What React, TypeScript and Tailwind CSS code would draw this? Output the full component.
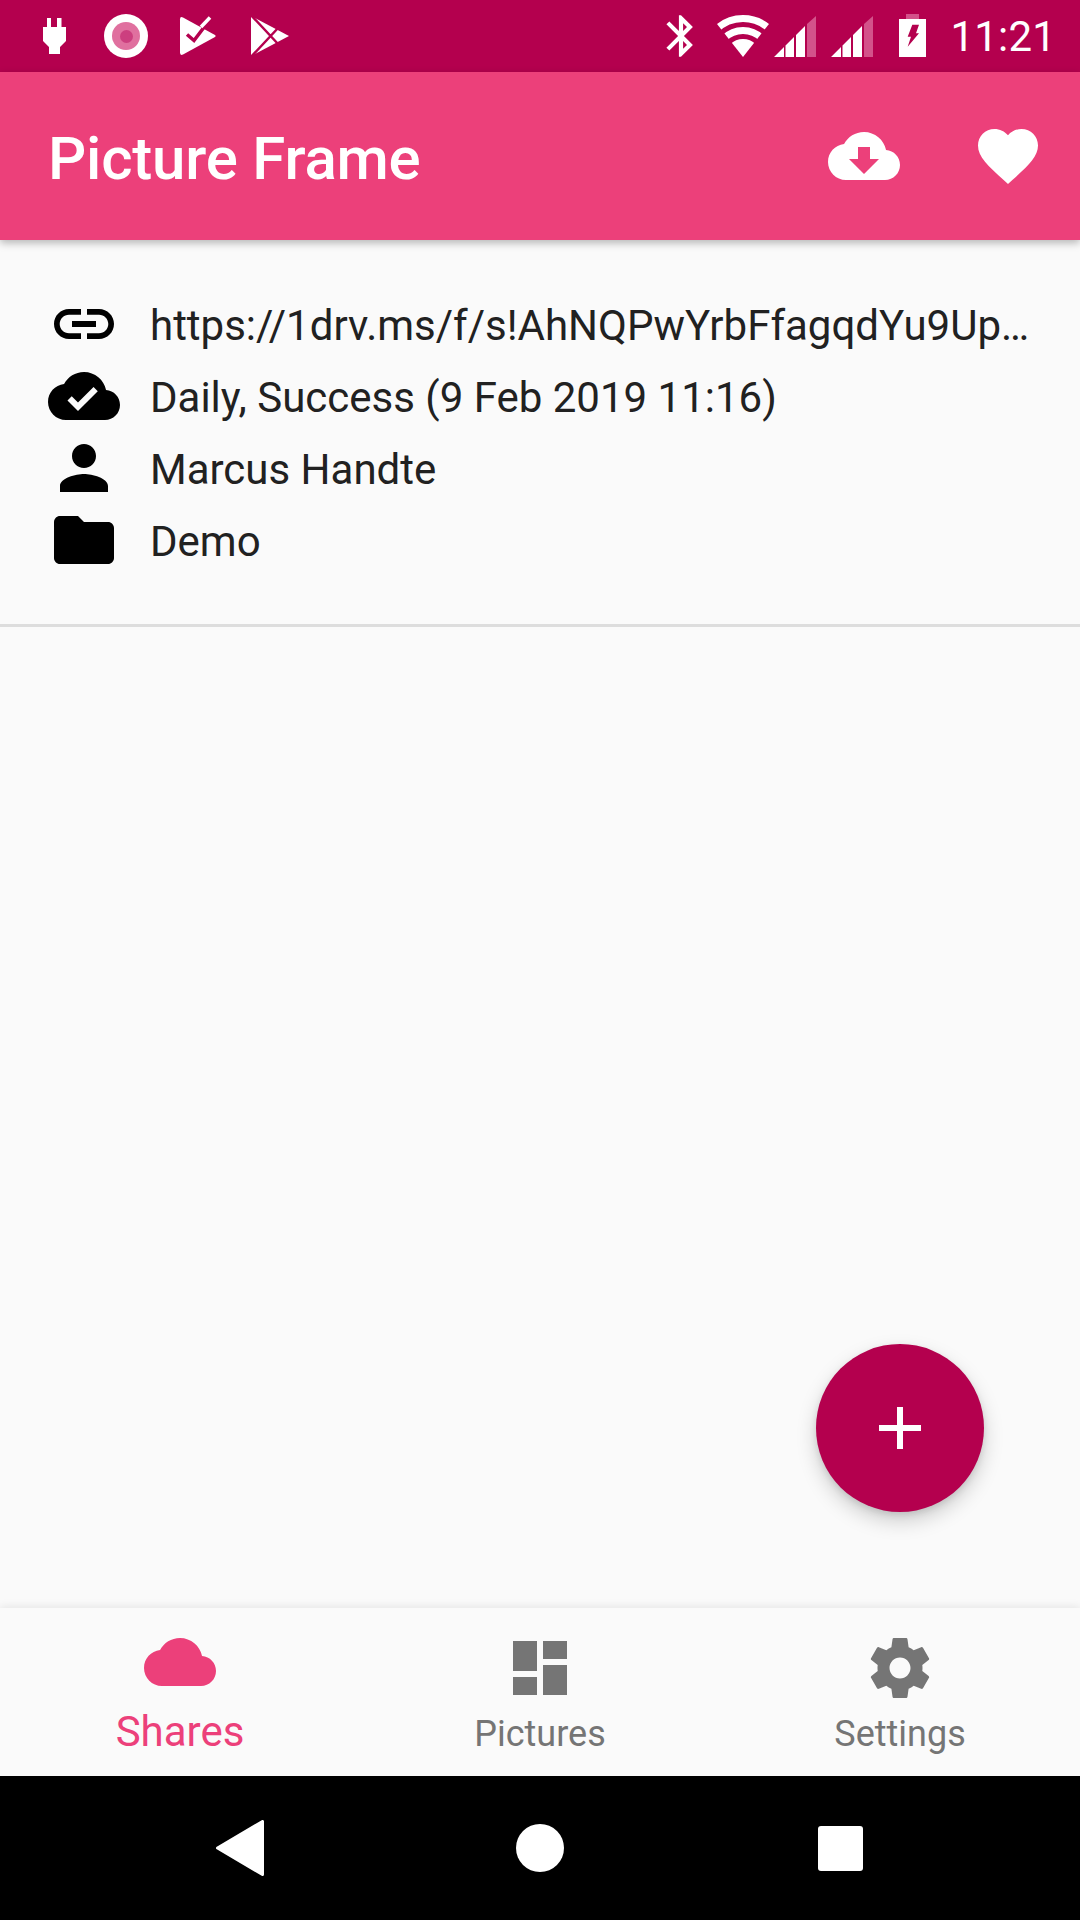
import { ReactNode } from "react";

const CLOUD =
  "M19.35 10.04C18.67 6.59 15.64 4 12 4 9.11 4 6.6 5.64 5.35 8.04 2.34 8.36 0 10.91 0 14c0 3.31 2.69 6 6 6h13c2.76 0 5-2.24 5-5 0-2.64-2.05-4.78-4.65-4.96z";

function Icon({ d, className }: { d: string; className: string }) {
  return (
    <svg viewBox="0 0 24 24" fill="currentColor" className={`w-[72px] h-[72px] shrink-0 ${className}`}>
      <path d={d} />
    </svg>
  );
}

function StatusLeft() {
  return (
    <div className="flex items-center pl-[18px]">
      <div className="w-[72px] flex justify-center">
        {/* plug */}
        <svg viewBox="0 0 24 36" className="w-[24px] h-[36px]">
          <path
            fill="#fff"
            d="M5 0h4v9h6V0h4.500v9H24v14l-6 6v7H7v-7l-6-6V9h4z"
          />
        </svg>
      </div>
      <div className="w-[72px] flex justify-center">
        <div className="w-[44px] h-[44px] rounded-full bg-white flex items-center justify-center">
          <div className="w-[28px] h-[28px] rounded-full bg-[#e0709f] flex items-center justify-center">
            <div className="w-[13px] h-[13px] rounded-full bg-[#cc3f7f]" />
          </div>
        </div>
      </div>
      <div className="w-[72px] flex justify-center">
        {/* tasks */}
        <svg viewBox="0 0 38 40" className="w-[38px] h-[40px]">
          <path fill="#fff" d="M1 3.500Q1 0 4 1.500L36 19q1.500 1 0 2L4 38.500Q1 40 1 36.500z" />
          <path fill="none" stroke="#b4004e" strokeWidth="3.500" d="M8 18.500l7 6L24.500 12" />
          <path fill="none" stroke="#fff" strokeWidth="3.500" d="M22 11L31 1.500" />
        </svg>
      </div>
      <div className="w-[72px] flex justify-center">
        {/* play store */}
        <svg viewBox="0 0 38 42" className="w-[38px] h-[42px]">
          <path fill="#fff" d="M0 1L38 21L0 41z" />
          <path fill="none" stroke="#b4004e" strokeWidth="2.500" d="M-1 -1L28 30M-1 43L28 12" />
        </svg>
      </div>
    </div>
  );
}

function Signal({ className }: { className: string }) {
  return (
    <svg viewBox="0 0 42 41" className={`w-[42px] h-[41px] shrink-0 ${className}`}>
      <path fill="#fff" d="M0 41L10 31V41zM11.500 41V29.500L20 21V41zM22 41V19L31 10V41z" />
      <path fill="#d3528a" d="M33 41V8L42 0V41z" />
    </svg>
  );
}

function StatusRight() {
  return (
    <div className="flex items-center pr-[24px]">
      <svg viewBox="0 0 24 24" fill="#fff" className="w-[50px] h-[50px] shrink-0">
        <path d="M17.710 7.710L12 2h-1v7.590L6.410 5 5 6.410 10.590 12 5 17.590 6.410 19 11 14.410V22h1l5.710-5.710-4.300-4.290 4.300-4.290zM13 5.830l1.880 1.880L13 9.590V5.830zm1.880 10.460L13 18.170v-3.760l1.880 1.880z" />
      </svg>
      <svg viewBox="0 0 52 42" className="w-[52px] h-[42px] ml-[11px] shrink-0">
        <clipPath id="wifi-wedge">
          <path d="M26 42L-7 0H59z" />
        </clipPath>
        <g clipPath="url(#wifi-wedge)" fill="none" stroke="#fff">
          <circle cx="26" cy="42" r="38.500" strokeWidth="7" />
          <circle cx="26" cy="42" r="26.500" strokeWidth="7" />
          <circle cx="26" cy="42" r="18" fill="#fff" stroke="none" />
        </g>
      </svg>
      <Signal className="ml-[5px]" />
      <Signal className="ml-[15px]" />
      <svg viewBox="0 0 28 44" className="w-[28px] h-[44px] ml-[26px] shrink-0">
        <path fill="#d3528a" d="M7 0h13v5H7z" />
        <path fill="#fff" d="M0 5h27v38H0z" />
        <path fill="#b4004e" d="M13.300 10.700H20L17 19.300H20L8.700 32.700L12 22.700H8.700z" />
      </svg>
      <span className="ml-[23px] pt-[2px] text-[42px] leading-[48px] text-white tracking-[0.2px]">11:21</span>
    </div>
  );
}

function InfoRow({ d, children }: { d: string; children: ReactNode }) {
  return (
    <div className="flex items-center h-[72px]">
      <Icon d={d} className="text-black" />
      <span className="ml-[30px] pt-[3px] text-[42px] leading-[72px] text-[#212121] whitespace-nowrap">{children}</span>
    </div>
  );
}

function Tab({ d, label, active }: { d: string; label: string; active?: boolean }) {
  return (
    <div className={`flex-1 flex flex-col items-center ${active ? "pt-[18px] text-[#ec407a]" : "pt-[24px] text-[#757575]"}`}>
      <Icon d={d} className="" />
      <span className={active ? "mt-[10px] text-[42px] leading-[48px]" : "mt-[9px] text-[36px] leading-[42px]"}>{label}</span>
    </div>
  );
}

export default function App() {
  return (
    <div className="relative flex flex-col w-[1080px] h-[1920px] overflow-hidden bg-[#fafafa] font-['Roboto',sans-serif]">
      <div className="flex items-center justify-between h-[72px] bg-[#b4004e]">
        <StatusLeft />
        <StatusRight />
      </div>

      <header className="relative z-10 flex items-center h-[168px] pl-[48px] pr-[36px] bg-[#ec407a] shadow-[0_3px_8px_rgba(0,0,0,0.28)]">
        <h1 className="pt-[5px] text-[60px] leading-[72px] font-medium tracking-[-0.2px] text-white">Picture Frame</h1>
        <div className="ml-auto flex gap-[72px] text-white">
          <Icon
            d="M19.350 10.040C18.670 6.590 15.640 4 12 4 9.110 4 6.600 5.640 5.350 8.040 2.340 8.360 0 10.910 0 14c0 3.310 2.690 6 6 6h13c2.760 0 5-2.240 5-5 0-2.640-2.050-4.780-4.650-4.960zM17 13l-5 5-5-5h3V9h4v4h3z"
            className=""
          />
          <Icon
            d="M12 21.350l-1.450-1.320C5.400 15.360 2 12.280 2 8.500 2 5.420 4.420 3 7.500 3c1.740 0 3.410.81 4.500 2.090C13.090 3.810 14.760 3 16.500 3 19.580 3 22 5.420 22 8.500c0 3.780-3.400 6.860-8.550 11.540L12 21.350z"
            className=""
          />
        </div>
      </header>

      <section className="px-[48px] py-[48px] border-b-[3px] border-[#dddddd]">
        <InfoRow d="M3.900 12c0-1.710 1.390-3.100 3.100-3.100h4V7H7c-2.760 0-5 2.240-5 5s2.240 5 5 5h4v-1.900H7c-1.710 0-3.100-1.390-3.100-3.100zM8 13h8v-2H8v2zm9-6h-4v1.900h4c1.710 0 3.100 1.390 3.100 3.100s-1.390 3.100-3.100 3.100h-4V17h4c2.760 0 5-2.240 5-5s-2.240-5-5-5z">
          https://1drv.ms/f/s!AhNQPwYrbFfagqdYu9Up…
        </InfoRow>
        <InfoRow d="M19.350 10.040C18.670 6.590 15.640 4 12 4 9.110 4 6.600 5.640 5.350 8.040 2.340 8.360 0 10.910 0 14c0 3.310 2.690 6 6 6h13c2.760 0 5-2.240 5-5 0-2.640-2.050-4.780-4.650-4.960zM10 17l-3.500-3.500 1.410-1.410L10 14.170 15.180 9l1.410 1.410L10 17z">
          Daily, Success (9 Feb 2019 11:16)
        </InfoRow>
        <InfoRow d="M12 12c2.210 0 4-1.790 4-4s-1.790-4-4-4-4 1.790-4 4 1.790 4 4 4zm0 2c-2.670 0-8 1.340-8 4v2h16v-2c0-2.660-5.330-4-8-4z">
          Marcus Handte
        </InfoRow>
        <InfoRow d="M10 4H4c-1.100 0-1.990.9-1.990 2L2 18c0 1.100.9 2 2 2h16c1.100 0 2-.9 2-2V8c0-1.100-.9-2-2-2h-8l-2-2z">
          Demo
        </InfoRow>
      </section>

      <div className="flex-1" />

      <nav className="flex h-[168px] bg-[#fafafa] shadow-[0_-2px_8px_rgba(0,0,0,0.08)]">
        <Tab d={CLOUD} label="Shares" active />
        <Tab d="M3 13h8V3H3v10zm0 8h8v-6H3v6zm10 0h8V11h-8v10zm0-18v6h8V3h-8z" label="Pictures" />
        <Tab
          d="M19.430 12.980c.04-.32.07-.64.07-.98s-.03-.66-.07-.98l2.110-1.650c.19-.15.24-.42.12-.64l-2-3.460c-.12-.22-.39-.3-.61-.22l-2.490 1c-.52-.4-1.080-.73-1.690-.98l-.38-2.650C14.460 2.180 14.250 2 14 2h-4c-.25 0-.46.18-.49.42l-.38 2.650c-.61.25-1.170.59-1.690.98l-2.490-1c-.23-.09-.49 0-.61.22l-2 3.460c-.13.22-.07.49.12.64l2.110 1.650c-.04.32-.07.65-.07.98s.03.66.07.98l-2.110 1.650c-.19.15-.24.42-.12.64l2 3.460c.12.22.39.3.61.22l2.490-1c.52.4 1.080.73 1.690.98l.38 2.650c.03.24.24.42.49.42h4c.25 0 .46-.18.49-.42l.38-2.650c.61-.25 1.170-.59 1.690-.98l2.490 1c.23.09.49 0 .61-.22l2-3.460c.12-.22.07-.49-.12-.64l-2.110-1.650zM12 15.500c-1.930 0-3.500-1.570-3.500-3.500s1.570-3.500 3.500-3.500 3.500 1.570 3.500 3.500-1.570 3.500-3.500 3.500z"
          label="Settings"
        />
      </nav>

      <div className="flex justify-center items-center h-[144px] bg-black">
        <div className="w-[300px] flex justify-center">
          <svg viewBox="0 0 48 56" className="w-[48px] h-[56px]">
            <path fill="#fff" stroke="#fff" strokeWidth="3" strokeLinejoin="round" d="M46.500 1.500V54.500L1.500 28z" />
          </svg>
        </div>
        <div className="w-[300px] flex justify-center">
          <div className="w-[48px] h-[48px] rounded-full bg-white" />
        </div>
        <div className="w-[300px] flex justify-center">
          <div className="w-[45px] h-[45px] rounded-[3px] bg-white" />
        </div>
      </div>

      {/* floating add button */}
      <button className="absolute right-[96px] bottom-[408px] flex items-center justify-center w-[168px] h-[168px] rounded-full bg-[#b4004e] text-white shadow-[0_9px_20px_rgba(0,0,0,0.18),0_3px_6px_rgba(0,0,0,0.1)]">
        <Icon d="M19 13h-6v6h-2v-6H5v-2h6V5h2v6h6v2z" className="" />
      </button>
    </div>
  );
}
